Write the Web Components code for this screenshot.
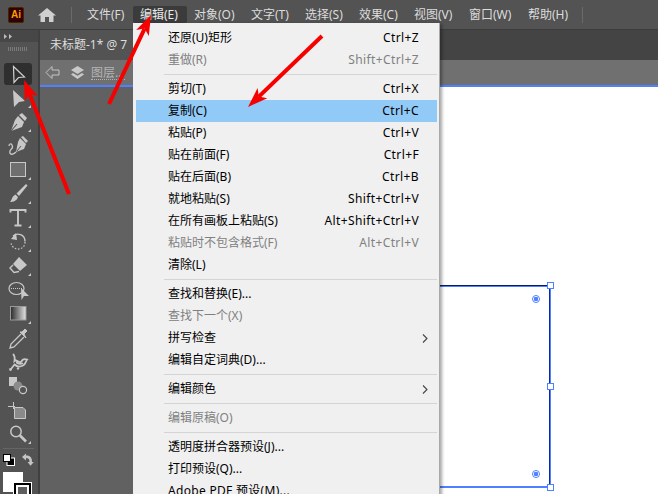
<!DOCTYPE html>
<html lang="zh">
<head>
<meta charset="utf-8">
<title>Illustrator</title>
<style>
  html, body { margin: 0; padding: 0; background: #535353; overflow: hidden; }
  body { font: 12px/1 "Noto Sans", "Noto Sans CJK SC", sans-serif; }
  svg { display: block; }
</style>
</head>
<body>
<ai-app>
  <ai-menubar slot="bar"></ai-menubar>
  <ai-toolbox slot="tools">
    <ai-tool active>
      <svg width="24" height="24" viewBox="0 0 24 24"><path d="M7.5 4.5 L18.5 15 L12.5 15.5 L8 20.5 Z" fill="#2f2f2f" stroke="#d0d0d0" stroke-width="1.2"/></svg>
    </ai-tool>
    <ai-tool more>
      <svg width="24" height="24" viewBox="0 0 24 24"><path d="M7 4 L19 15 L13 16 L8 21 Z" fill="#c8c8c8"/></svg>
    </ai-tool>
    <ai-tool more>
      <svg width="24" height="24" viewBox="0 0 24 24"><path d="M13 5 L16 3 L21 8 L19 11 Z" fill="#c8c8c8"/><path d="M12 6 L18 12 L16 17 L5 21 L9 10 Z" fill="#c8c8c8"/><path d="M5 21 L11 14" stroke="#535353" stroke-width="1.1"/></svg>
    </ai-tool>
    <ai-tool>
      <svg width="24" height="24" viewBox="0 0 24 24"><path d="M15 3 L17 2 L22 7 L20 9 Z" fill="#c8c8c8"/><path d="M14 4 L20 10 L18 15 L10 18 L12 8 Z" fill="#c8c8c8"/><path d="M11 17 L15 12" stroke="#535353"/><path d="M10 18 C6 22 3 20 4 17 C5 14 8 15 6 11 C5 9 3 10 3 12" fill="none" stroke="#c8c8c8" stroke-width="1.3"/></svg>
    </ai-tool>
    <ai-tool more>
      <svg width="24" height="24" viewBox="0 0 24 24"><rect x="4.5" y="4.5" width="15" height="14" fill="#6f6f6f" stroke="#c8c8c8"/></svg>
    </ai-tool>
    <ai-tool more>
      <svg width="24" height="24" viewBox="0 0 24 24"><path d="M20 2 L21.5 3.5 L13 14 L10.5 11.5 Z" fill="#c8c8c8"/><path d="M9.5 12.5 L12 15 C11 19 7 20 4 20 C6 18 6 14 9.5 12.5 Z" fill="#c8c8c8"/></svg>
    </ai-tool>
    <ai-tool more>
      <svg width="24" height="24" viewBox="0 0 24 24"><path d="M4.5 6.5 V4 H19.5 V6.5 M12 4 V19 M8.5 19.5 H15.5" fill="none" stroke="#c8c8c8" stroke-width="1.9"/></svg>
    </ai-tool>
    <ai-tool more>
      <svg width="24" height="24" viewBox="0 0 24 24"><path d="M7 6 C11 2.5 19 4 19 11.5" fill="none" stroke="#c8c8c8" stroke-width="1.4"/><path d="M19 12 C19 17 15 19.5 11 19 C7.5 18.5 5 15.5 5 12" fill="none" stroke="#c8c8c8" stroke-width="1.2" stroke-dasharray="1.6 1.6"/><path d="M5 9 L10 3 L11 10 Z" fill="#c8c8c8"/></svg>
    </ai-tool>
    <ai-tool more>
      <svg width="24" height="24" viewBox="0 0 24 24"><path d="M13 3 L21 11 L14 17 L7 10 Z" fill="#c8c8c8"/><path d="M7 11 L4 14 L8 18.5 L13 17.5" fill="none" stroke="#c8c8c8" stroke-width="1.4"/></svg>
    </ai-tool>
    <ai-tool>
      <svg width="24" height="24" viewBox="0 0 24 24"><ellipse cx="10.5" cy="10.5" rx="7.5" ry="6" fill="none" stroke="#c8c8c8" stroke-width="1.2"/><path d="M5 10.5 H16" stroke="#c8c8c8" stroke-dasharray="1 1"/><path d="M15 10 L23 18 L18 18 L15.5 22 Z" fill="#c8c8c8"/></svg>
    </ai-tool>
    <ai-tool more>
      <svg width="24" height="24" viewBox="0 0 24 24"><defs><linearGradient id="g"><stop offset="0" stop-color="#2a2a2a"/><stop offset="1" stop-color="#e4e4e4"/></linearGradient></defs><rect x="4.5" y="4.5" width="15.5" height="13.5" fill="url(#g)" stroke="#9a9a9a"/></svg>
    </ai-tool>
    <ai-tool>
      <svg width="24" height="24" viewBox="0 0 24 24"><path d="M15 8 L5 18 L4 22 L8 21 L18 11" fill="#535353" stroke="#c8c8c8" stroke-width="1.3"/><path d="M14 6 L20 12 L18 8 L21 5 L19 3 L16 6 Z" fill="#c8c8c8" stroke="#c8c8c8"/></svg>
    </ai-tool>
    <ai-tool>
      <svg width="24" height="24" viewBox="0 0 24 24"><path d="M7 4 C9 6 9 8 8.5 11 C11 9 12 13 15 12 C16 10 18 8.5 21 9.5 C20 10.5 20 14 17 15.5 C13 17.5 10 16 8.5 14.5 L5 19" fill="none" stroke="#c8c8c8" stroke-width="1.8"/><path d="M10 11 C12 12 14 14 17 12.5 L17 14 C14 15.5 11 14.5 10 13 Z" fill="#c8c8c8"/><circle cx="4.5" cy="19.5" r="1.4" fill="#c8c8c8"/><circle cx="12" cy="18.5" r="1.2" fill="#c8c8c8"/></svg>
    </ai-tool>
    <ai-tool>
      <svg width="24" height="24" viewBox="0 0 24 24"><rect x="3" y="3" width="8" height="9" fill="#c8c8c8"/><circle cx="12" cy="12" r="4.5" fill="#8a8a8a"/><circle cx="17" cy="16" r="3.6" fill="#535353" stroke="#c8c8c8" stroke-width="1.2"/></svg>
    </ai-tool>
    <ai-tool>
      <svg width="24" height="24" viewBox="0 0 24 24"><path d="M2 8.5 H9 M7.5 4 V11" stroke="#c8c8c8" stroke-width="1"/><path d="M8.5 9.5 H17 L19.5 12 V20.5 H8.5 Z" fill="#8a8a8a" stroke="#c8c8c8"/></svg>
    </ai-tool>
    <ai-tool more>
      <svg width="24" height="24" viewBox="0 0 24 24"><circle cx="10" cy="9.5" r="5.2" fill="none" stroke="#c8c8c8" stroke-width="1.5"/><path d="M14 13.5 L20 19.5" stroke="#c8c8c8" stroke-width="2.6"/></svg>
    </ai-tool>
  </ai-toolbox>
  <ai-document slot="doc" title-text="未标题-1* @ 7"></ai-document>
  <ai-menu slot="over">
    <ai-menu-item label="还原(U)矩形" keys="Ctrl+Z"></ai-menu-item>
    <ai-menu-item label="重做(R)" keys="Shift+Ctrl+Z" disabled></ai-menu-item>
    <ai-menu-sep></ai-menu-sep>
    <ai-menu-item label="剪切(T)" keys="Ctrl+X"></ai-menu-item>
    <ai-menu-item label="复制(C)" keys="Ctrl+C" hot></ai-menu-item>
    <ai-menu-item label="粘贴(P)" keys="Ctrl+V"></ai-menu-item>
    <ai-menu-item label="贴在前面(F)" keys="Ctrl+F"></ai-menu-item>
    <ai-menu-item label="贴在后面(B)" keys="Ctrl+B"></ai-menu-item>
    <ai-menu-item label="就地粘贴(S)" keys="Shift+Ctrl+V"></ai-menu-item>
    <ai-menu-item label="在所有画板上粘贴(S)" keys="Alt+Shift+Ctrl+V"></ai-menu-item>
    <ai-menu-item label="粘贴时不包含格式(F)" keys="Alt+Ctrl+V" disabled></ai-menu-item>
    <ai-menu-item label="清除(L)"></ai-menu-item>
    <ai-menu-sep></ai-menu-sep>
    <ai-menu-item label="查找和替换(E)..."></ai-menu-item>
    <ai-menu-item label="查找下一个(X)" disabled></ai-menu-item>
    <ai-menu-item label="拼写检查" sub></ai-menu-item>
    <ai-menu-item label="编辑自定词典(D)..."></ai-menu-item>
    <ai-menu-sep></ai-menu-sep>
    <ai-menu-item label="编辑颜色" sub></ai-menu-item>
    <ai-menu-sep></ai-menu-sep>
    <ai-menu-item label="编辑原稿(O)" disabled></ai-menu-item>
    <ai-menu-sep></ai-menu-sep>
    <ai-menu-item label="透明度拼合器预设(J)..."></ai-menu-item>
    <ai-menu-item label="打印预设(Q)..."></ai-menu-item>
    <ai-menu-item label="Adobe PDF 预设(M)..." style="letter-spacing:.3px"></ai-menu-item>
  </ai-menu>
  <ai-arrows slot="over"></ai-arrows>
</ai-app>

<script>
class AiApp extends HTMLElement{
    constructor(){
        super();
        this.attachShadow({ mode: "open" });
        this.shadowRoot.innerHTML = `
        <style>
        :host{
            display: grid;
            grid-template-rows: 30px 1fr;
            grid-template-columns: 40px 1fr;
            width: 658px;
            height: 494px;
            position: relative;
            overflow: hidden;
        }
        #bar{ grid-column: 1 / 3; }
        </style>
        <div id="bar"><slot name="bar"></slot></div>
        <slot name="tools"></slot>
        <slot name="doc"></slot>
        <slot name="over"></slot>
        `;
    }
}
customElements.define("ai-app", AiApp);

class AiMenubar extends HTMLElement{
    constructor(){
        super();
        this.attachShadow({ mode: "open" });
        const items = [["文件(F)",53],["编辑(E)",54],["对象(O)",57],["文字(T)",54],["选择(S)",54],["效果(C)",55],["视图(V)",55],["窗口(W)",59],["帮助(H)",54]];
        this.shadowRoot.innerHTML = `
        <style>
        :host{ display: block; height: 30px; box-sizing: border-box; background: #535353; border-bottom: 1px solid #3c3c3c; }
        #row{ display: flex; align-items: center; height: 29px; color: #dcdcdc; font-size: 12px; white-space: nowrap; }
        #logo{ width: 16px; height: 16px; box-sizing: border-box; margin: 0 14px 0 8px; background: #310000; border: 1px solid #4a2200; border-radius: 2px; color: #ff9a00; font: bold 10px/14px "Liberation Sans", sans-serif; text-align: center; }
        #home{ margin-right: 15px; }
        .sep{ width: 1px; height: 16px; background: #6a6a6a; }
        #items{ display: flex; margin-left: 8px; }
        .it{ padding: 1.5px 7px; line-height: 14px; border-radius: 2px; box-sizing: border-box; }
        .it.on{ background: #3b3b3b; color: #e8e8e8; }
        .tail{ margin-left: 7px; }
        </style>
        <div id="row">
            <div id="logo">Ai</div>
            <svg id="home" width="18" height="16" viewBox="0 0 18 16"><path d="M9 1 L18 8.5 L15.5 8.5 L15.5 15 L11 15 L11 10 L7 10 L7 15 L2.5 15 L2.5 8.5 L0 8.5 Z" fill="#d0d0d0"/></svg>
            <div class="sep"></div>
            <div id="items">
                ${items.map((a, i) => `<div class="it${i == 1 ? " on" : ""}" style="width:${a[1]}px">${a[0]}</div>`).join("")}
            </div>
            <div class="sep tail"></div>
        </div>
        `;
    }
}
customElements.define("ai-menubar", AiMenubar);

class AiToolbox extends HTMLElement{
    constructor(){
        super();
        this.attachShadow({ mode: "open" });
        this.shadowRoot.innerHTML = `
        <style>
        :host{ display: flex; flex-direction: column; width: 40px; height: 464px; box-sizing: border-box; background: #535353; border-right: 2px solid #404040; overflow: hidden; }
        #head{ height: 12px; background: #474747; display: flex; align-items: center; padding-left: 4px; flex: none; }
        #grip{ height: 4px; margin: 5px 8px 11px; width: 20px; flex: none; background: repeating-linear-gradient(90deg, #7a7a7a 0 1px, transparent 1px 2px); }
        #tail{ border-top: 1px solid #656565; margin: 2px 4px 0 3px; padding-top: 4px; flex: none; }
        #sw{ display: flex; align-items: center; justify-content: space-between; padding-right: 0; height: 13px; }
        #fs{ position: relative; height: 24px; margin-top: 6px; }
        #fill{ position: absolute; left: 0; top: 0; width: 20px; height: 20px; background: #fff; }
        #stroke{ position: absolute; left: 10px; top: 10px; width: 19px; height: 19px; box-sizing: border-box; background: #000; border: 1px solid #fff; padding: 2px; }
        #stroke i{ display: block; width: 100%; height: 100%; box-sizing: border-box; border: 2px solid #fff; outline: 1px solid #000; background: #606060; }
        </style>
        <div id="head">
            <svg width="9" height="5" viewBox="0 0 9 5"><path d="M0 0 L3 2.5 L0 5 Z M5 0 L8 2.5 L5 5 Z" fill="#bdbdbd"/></svg>
        </div>
        <div id="grip"></div>
        <slot></slot>
        <div id="tail">
            <div id="sw">
                <svg width="12" height="12" viewBox="0 0 12 12"><rect x="4" y="4" width="7.5" height="7.5" fill="#000" stroke="#fff"/><rect x="0.5" y="0.5" width="7" height="7" fill="#fff" stroke="#000"/></svg>
                <svg width="12" height="13" viewBox="0 0 12 13"><path d="M0 4 L4 0.5 L4 2.5 C8 2.5 10 4 10 9 L11.8 9 L8.5 12.7 L5.5 9 L7.5 9 C7.5 6 6.5 5 4 5 L4 7.5 Z" fill="#c4c4c4"/></svg>
            </div>
            <div id="fs"><div id="fill"></div><div id="stroke"><i></i></div></div>
        </div>
        `;
    }
}
customElements.define("ai-toolbox", AiToolbox);

class AiTool extends HTMLElement{
    constructor(){
        super();
        this.attachShadow({ mode: "open" });
        this.shadowRoot.innerHTML = `
        <style>
        :host{ display: flex; align-items: center; justify-content: center; height: 24px; width: 36px; position: relative; flex: none; }
        :host([active]) #b{ background: #2f2f2f; }
        #b{ width: 28px; height: 22px; border-radius: 3px; display: flex; align-items: center; justify-content: center; }
        :host([more]) #b::after{ content: ""; position: absolute; right: 5px; bottom: 2px; border-style: solid; border-width: 0 0 3px 3px; border-color: transparent transparent #c8c8c8 transparent; }
        </style>
        <div id="b"><slot></slot></div>
        `;
    }
}
customElements.define("ai-tool", AiTool);

class AiDocument extends HTMLElement{
    static get observedAttributes(){
        return ['title-text'];
    }
    attributeChangedCallback(nameAtr, oldValue, newValue){
        this.titulo = newValue;
    }
    connectedCallback(){
        this.attachShadow({ mode: "open" });
        this.shadowRoot.innerHTML = `
        <style>
        :host{ display: flex; flex-direction: column; height: 464px; min-width: 0; background: #616161; }
        #tabs{ height: 30px; flex: none; background: #444; display: flex; }
        #tab{ width: 96px; background: #535353; color: #dedede; padding-left: 10px; font-size: 12px; line-height: 30px; white-space: pre; box-sizing: border-box; overflow: hidden; }
        #panel{ height: 25px; flex: none; background: #707070; display: flex; align-items: center; padding-left: 5px; gap: 10px; color: #b4b4b4; font-size: 12px; }
        #lbl{ border-bottom: 1px dotted #b4b4b4; line-height: 13px; margin-left: -4px; }
        #line{ height: 2px; flex: none; background: #4f80ff; }
        #canvas{ flex: 1; position: relative; overflow: hidden; }
        #board{ position: absolute; left: 95px; top: 0; right: 0; bottom: 0; background: #fff; }
        #sel{ position: absolute; left: 0; top: 198px; width: 416px; height: 203px; box-sizing: border-box; border: 1px solid #4f80ff; border-top-color: #0b1a66; border-bottom-width: 2px; box-shadow: inset 0 1px 0 #4f80ff, inset -1px 0 0 #0b2aa8; }
        .h{ position: absolute; width: 7px; height: 7px; box-sizing: border-box; background: #fff; border: 1px solid #4f80ff; right: -4px; }
        .w{ position: absolute; left: 396px; width: 8px; height: 8px; box-sizing: border-box; border-radius: 50%; border: 1px solid #4f80ff; background: radial-gradient(circle, #4f80ff 0 2px, #fff 2.5px); }
        </style>
        <div id="tabs"><div id="tab">${this.titulo}</div></div>
        <div id="panel">
            <svg width="15" height="15" viewBox="0 0 15 15"><path d="M1 7.5 L7 1.5 L7 5 L14 5 L14 10 L7 10 L7 13.5 Z" fill="none" stroke="#c4c4c4"/></svg>
            <svg width="15" height="15" viewBox="0 0 15 15"><path d="M7.5 1 L14 5 L7.5 9 L1 5 Z" fill="#c8c8c8"/><path d="M3 8 L7.5 10.8 L12 8 L14 9.5 L7.5 14 L1 9.5 Z" fill="#c8c8c8"/></svg>
            <span id="lbl">图层...</span>
        </div>
        <div id="line"></div>
        <div id="canvas">
            <div id="board">
                <div id="sel">
                    <div class="h" style="top:-4px"></div>
                    <div class="h" style="top:97px"></div>
                    <div class="h" style="bottom:-5px"></div>
                    <div class="w" style="top:9px"></div>
                    <div class="w" style="top:184px"></div>
                </div>
            </div>
        </div>
        `;
    }
}
customElements.define("ai-document", AiDocument);

class AiMenu extends HTMLElement{
    constructor(){
        super();
        this.attachShadow({ mode: "open" });
        this.shadowRoot.innerHTML = `
        <style>
        :host{
            position: absolute;
            left: 133px;
            top: 23px;
            width: 307px;
            height: 480px;
            box-sizing: border-box;
            padding: 4px 2px 0 3px;
            background: #f0f0f0;
            border: 1px solid #a8a8a8;
            border-width: 0 1px 0 0;
            box-shadow: 3px 0 3px -1px rgba(0,0,0,.35);
            color: #000;
        }
        </style>
        <slot></slot>
        `;
    }
}
customElements.define("ai-menu", AiMenu);

class AiMenuItem extends HTMLElement{
    connectedCallback(){
        this.attachShadow({ mode: "open" });
        const keys = this.getAttribute("keys") || "";
        const sub = this.hasAttribute("sub");
        this.shadowRoot.innerHTML = `
        <style>
        :host{ display: flex; align-items: center; justify-content: space-between; height: 22px; padding: 0 18px 0 32px; font-size: 12px; white-space: nowrap; position: relative; }
        :host([disabled]){ color: #808080; }
        :host([hot]){ background: #91c9f7; }
        svg{ position: absolute; right: 9px; top: 7px; }
        .k{ letter-spacing: .38px; }
        </style>
        <span>${this.getAttribute("label")}</span>
        ${keys ? `<span class="k">${keys}</span>` : ""}
        ${sub ? `<svg width="6" height="9" viewBox="0 0 6 9"><path d="M1 .5 L5 4.5 L1 8.5" fill="none" stroke="#444" stroke-width="1.1"/></svg>` : ""}
        `;
    }
}
customElements.define("ai-menu-item", AiMenuItem);

class AiMenuSep extends HTMLElement{
    constructor(){
        super();
        this.attachShadow({ mode: "open" });
        this.shadowRoot.innerHTML = `
        <style>
        :host{ display: flex; align-items: center; height: 7px; padding-left: 28px; }
        div{ flex: 1; height: 1px; background: #d4d4d4; }
        </style>
        <div></div>
        `;
    }
}
customElements.define("ai-menu-sep", AiMenuSep);

class AiArrows extends HTMLElement{
    constructor(){
        super();
        this.attachShadow({ mode: "open" });
        const arrow = (x1, y1, x2, y2) => {
            const a = Math.atan2(y2 - y1, x2 - x1), l = 20, w = 7;
            const bx = x2 - l * Math.cos(a), by = y2 - l * Math.sin(a);
            const px = -Math.sin(a) * w, py = Math.cos(a) * w;
            const nx = x2 - (l - 5) * Math.cos(a), ny = y2 - (l - 5) * Math.sin(a);
            return `<path d="M${x1} ${y1} L${nx} ${ny}" stroke="#f60000" stroke-width="4"/><path d="M${x2} ${y2} L${bx + px} ${by + py} L${nx} ${ny} L${bx - px} ${by - py} Z" fill="#f60000"/>`;
        };
        this.shadowRoot.innerHTML = `
        <style>
        :host{ position: absolute; left: 0; top: 0; width: 658px; height: 494px; pointer-events: none; }
        </style>
        <svg width="658" height="494" viewBox="0 0 658 494">
            ${arrow(69, 194, 24, 80)}
            ${arrow(109, 104, 151, 15)}
            ${arrow(322, 36, 248, 107)}
        </svg>
        `;
    }
}
customElements.define("ai-arrows", AiArrows);
</script>
</body>
</html>
